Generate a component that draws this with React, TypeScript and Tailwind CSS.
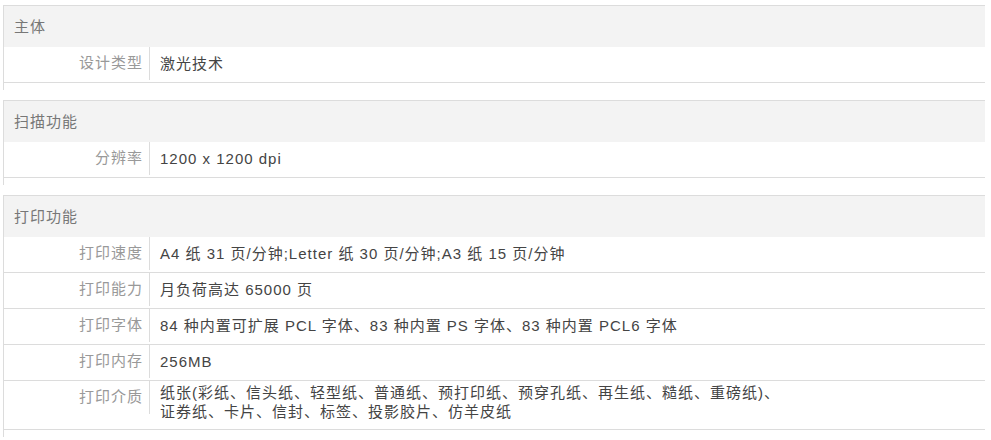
import React from "react";

type Row = { label: string; value: string[] };
type Section = { title: string; rows: Row[] };

const sections: Section[] = [
  { title: "主体", rows: [{ label: "设计类型", value: ["激光技术"] }] },
  { title: "扫描功能", rows: [{ label: "分辨率", value: ["1200 x 1200 dpi"] }] },
  {
    title: "打印功能",
    rows: [
      { label: "打印速度", value: ["A4 纸 31 页/分钟;Letter 纸 30 页/分钟;A3 纸 15 页/分钟"] },
      { label: "打印能力", value: ["月负荷高达 65000 页"] },
      { label: "打印字体", value: ["84 种内置可扩展 PCL 字体、83 种内置 PS 字体、83 种内置 PCL6 字体"] },
      { label: "打印内存", value: ["256MB"] },
      {
        label: "打印介质",
        value: [
          "纸张(彩纸、信头纸、轻型纸、普通纸、预打印纸、预穿孔纸、再生纸、糙纸、重磅纸)、",
          "证券纸、卡片、信封、标签、投影胶片、仿羊皮纸",
        ],
      },
    ],
  },
];

function SpecRow({ row }: { row: Row }) {
  const multi = row.value.length > 1;
  return (
    <div className="flex items-start border-b border-[#dcdcdc]">
      <div className="w-[146px] shrink-0 h-[33px] flex items-center justify-end pr-[6px] border-r border-[#dcdcdc] text-[#999999]">
        {row.label}
      </div>
      <div
        className={
          multi
            ? "pl-[10px] pt-[2px] pb-[8px] leading-[19px] text-[#444444]"
            : "pl-[10px] pt-[7px] pb-[8px] leading-[20px] text-[#444444]"
        }
      >
        {row.value.map((v, i) => (
          <div key={i}>{v}</div>
        ))}
      </div>
    </div>
  );
}

export default function App() {
  return (
    <div className="w-[991px] h-[440px] overflow-hidden bg-white pt-[5px] font-['Liberation_Sans','Noto_Sans_CJK_SC',sans-serif] text-[15px] tracking-[1px]">
      <div className="ml-[3px] w-[982px] flex flex-col gap-[10px]">
        {sections.map((s) => (
          <div key={s.title} className="border-l border-t border-[#dcdcdc] pb-[7px]">
            <div className="h-[41px] bg-[#f3f3f3] pl-[10px] pt-[2px] flex items-center text-[#777777]">{s.title}</div>
            {s.rows.map((r) => (
              <SpecRow key={r.label} row={r} />
            ))}
          </div>
        ))}
      </div>
    </div>
  );
}
